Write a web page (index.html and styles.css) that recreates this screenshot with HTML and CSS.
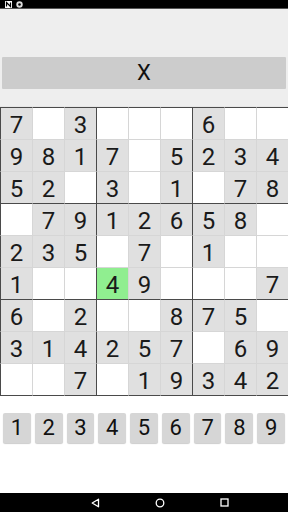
FILE: index.html
```html
<!DOCTYPE html>
<html lang="en">
<head>
    <meta charset="UTF-8">
    <meta name="viewport" content="width=device-width, initial-scale=1.0">
    <title>Sudoku</title>
    <link rel="stylesheet" href="styles.css">
</head>
<body>
    <div class="status-bar">
        <svg class="status-icon" width="7" height="7" viewBox="0 0 7 7">
            <rect x="0" y="0" width="7" height="7" fill="#fff"/>
            <path d="M1.5 5.5V1.5L5.5 5.5V1.5" stroke="#000" stroke-width="1.2" fill="none"/>
        </svg>
        <svg class="status-icon" width="7" height="7" viewBox="0 0 7 7">
            <circle cx="3.5" cy="3.5" r="3.2" fill="#ddd"/>
            <circle cx="3.5" cy="3.5" r="1.3" fill="#000"/>
        </svg>
    </div>

    <div class="top-panel">
        <button class="clear-button">X</button>
    </div>

    <div class="board" id="board"></div>

    <div class="keypad">
        <button class="key">1</button>
        <button class="key">2</button>
        <button class="key">3</button>
        <button class="key">4</button>
        <button class="key">5</button>
        <button class="key">6</button>
        <button class="key">7</button>
        <button class="key">8</button>
        <button class="key">9</button>
    </div>

    <div class="nav-bar">
        <svg width="9" height="10" viewBox="0 0 9 10">
            <path d="M7.5 1.2V8.8L1.2 5Z" stroke="#fff" stroke-width="1.3" fill="none" stroke-linejoin="round"/>
        </svg>
        <svg width="10" height="10" viewBox="0 0 10 10">
            <circle cx="5" cy="5" r="3.8" stroke="#fff" stroke-width="1.3" fill="none"/>
        </svg>
        <svg width="9" height="9" viewBox="0 0 9 9">
            <rect x="1" y="1" width="7" height="7" stroke="#fff" stroke-width="1.3" fill="none"/>
        </svg>
    </div>

    <script>
        const puzzle = [
            "7.3...6..",
            "9817.5234",
            "52.3.1.78",
            ".7912658.",
            "235.7.1..",
            "1..49...7",
            "6.2..875.",
            "314257.69",
            "..7.19342"
        ];

        const board = document.getElementById("board");

        puzzle.forEach((row, r) => {
            row.split("").forEach((value, c) => {
                let cell = document.createElement("div");
                cell.className = "cell";
                if (value !== ".") {
                    cell.classList.add("filled");
                    cell.textContent = value;
                }
                if (c % 3 === 0) cell.classList.add("box-left");
                if (r % 3 === 0) cell.classList.add("box-top");
                if (r === 8) cell.classList.add("box-bottom");
                if (r === 5 && c === 3) cell.classList.add("selected");
                board.appendChild(cell);
            });
        });
    </script>
</body>
</html>
```

FILE: styles.css
```css
* {
    margin: 0;
    padding: 0;
    box-sizing: border-box;
    font-family: Roboto, "Noto Sans", sans-serif;
}

body {
    width: 288px;
    height: 512px;
    background-color: #ffffff;
    display: flex;
    flex-direction: column;
    overflow: hidden;
}

.status-bar {
    height: 9px;
    background-color: #000000;
    display: flex;
    align-items: center;
    gap: 4px;
    padding-left: 5px;
    border-bottom: 1px solid #555;
}

.status-icon {
    display: block;
}

.top-panel {
    height: 98px;
    background-color: #eeeeee;
    padding: 48px 2px 0 2px;
    border-bottom: 1px solid #e6e6e6;
}

.clear-button {
    width: 100%;
    height: 32px;
    background-color: #cccccc;
    border: none;
    border-radius: 1px;
    color: #111;
    font-size: 22px;
    font-weight: 400;
    line-height: 32px;
}

.board {
    display: grid;
    grid-template-columns: repeat(9, 32px);
    grid-auto-rows: 32px;
    width: 288px;
}

.cell {
    border-left: 1px solid #d6d6d6;
    border-top: 1px solid #d6d6d6;
    background-color: #ffffff;
    color: #1a1a1a;
    font-size: 24px;
    display: flex;
    align-items: center;
    justify-content: center;
    padding-top: 3px;
}

.cell.filled {
    background-color: #e0e0e0;
}

.cell.selected {
    background-color: #90ee90;
}

.cell.box-left {
    border-left: 1px solid #4a4a4a;
}

.cell.box-top {
    border-top: 1px solid #4a4a4a;
}

.cell.box-bottom {
    border-bottom: 1px solid #4a4a4a;
    height: 33px;
}

.keypad {
    display: flex;
    gap: 4px;
    padding: 18px 3px 0 3px;
}

.key {
    width: 28px;
    height: 30px;
    background-color: #d6d6d6;
    border: none;
    border-radius: 2px;
    box-shadow: 0 1px 1px rgba(0, 0, 0, 0.2);
    color: #111;
    font-size: 22px;
    line-height: 30px;
}

.nav-bar {
    margin-top: auto;
    height: 19px;
    background-color: #000000;
    display: flex;
    align-items: center;
    justify-content: center;
    gap: 55px;
    padding-left: 32px;
}

.nav-bar svg {
    display: block;
}
```
